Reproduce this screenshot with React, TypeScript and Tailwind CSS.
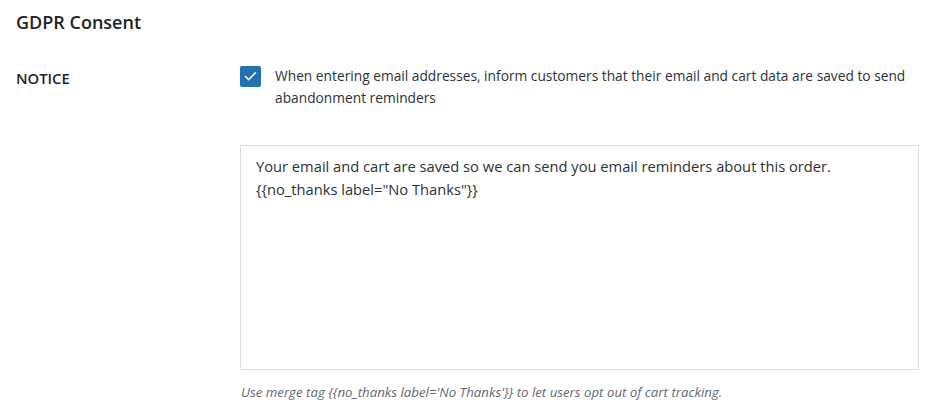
import { Check } from "lucide-react";

export default function App() {
  return (
    <div className="min-h-screen bg-white font-['Open_Sans',sans-serif] text-[#1d2327]">
      <h2 className="pl-4 pt-[9px] text-[18px] font-semibold leading-[26px]">GDPR Consent</h2>

      <div className="mt-[30px] flex">
        <div className="w-[240px] shrink-0 pl-4 pt-[2px] text-[14.8px] font-semibold leading-[22px]">NOTICE</div>

        <div className="w-[679px]">
          <label className="flex items-start gap-[14px]">
            <span className="mt-[1px] flex h-[21px] w-[21px] shrink-0 items-center justify-center rounded-[2px] bg-[#2271b1]">
              <Check className="h-[15px] w-[15px] text-white" strokeWidth={2.5} />
            </span>
            <span className="text-[13.75px] leading-[22px] text-[#2c3338]">
              When entering email addresses, inform customers that their email and cart data are saved to send
              abandonment reminders
            </span>
          </label>

          <textarea
            className="mt-[36px] block h-[225px] w-full resize-none rounded-[1px] border border-[#dcdcde] px-[15px] py-[9px] text-[14.7px] leading-[23px] text-[#2c3338] outline-none"
            defaultValue={'Your email and cart are saved so we can send you email reminders about this order.\n{{no_thanks label="No Thanks"}}'}
          />

          <p className="mt-[12px] pl-px text-[13.25px] italic leading-[20px] text-[#646970]">
            Use merge tag {"{{no_thanks label='No Thanks'}}"} to let users opt out of cart tracking.
          </p>
        </div>
      </div>
    </div>
  );
}
